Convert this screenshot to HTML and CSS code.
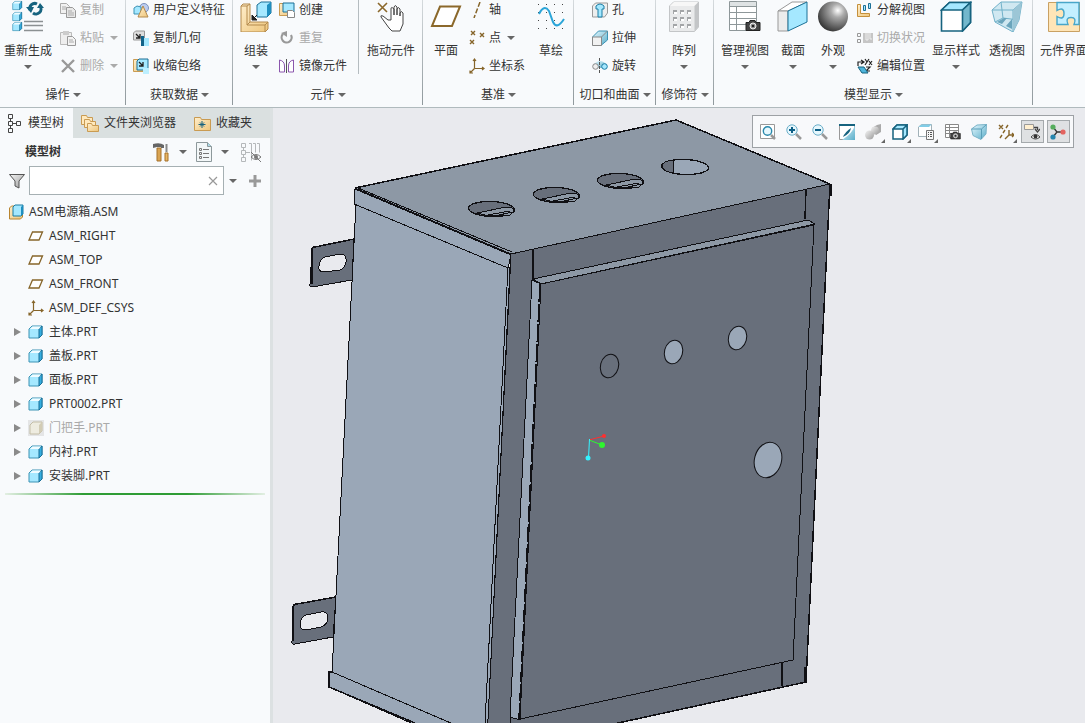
FILE: index.html
```html
<!DOCTYPE html>
<html lang="zh-CN">
<head>
  <meta charset="UTF-8" />
  <title>ASM电源箱.ASM</title>
  <meta name="viewport" content="width=device-width, initial-scale=1.0" />
  <link rel="stylesheet" href="styles.css">
</head>
<body>

<!-- Shared icons -->
<svg class="defs" aria-hidden="true">
  <defs>
    <linearGradient id="wood" x1="0" y1="0" x2="1" y2="1"><stop offset="0" stop-color="#ffeecb"/><stop offset="1" stop-color="#eec67c"/></linearGradient>
    <linearGradient id="steel" x1="0" y1="0" x2="1" y2="1"><stop offset="0" stop-color="#f4f4f4"/><stop offset="1" stop-color="#9b9b9b"/></linearGradient>
    <linearGradient id="aqua" x1="0" y1="0" x2="1" y2="1"><stop offset="0" stop-color="#e6f8ff"/><stop offset="1" stop-color="#5aaec9"/></linearGradient>
    <radialGradient id="ball" cx="0.66" cy="0.3" r="0.75"><stop offset="0" stop-color="#fff"/><stop offset="0.3" stop-color="#aaa"/><stop offset="1" stop-color="#333"/></radialGradient>
  </defs>
  <symbol id="cube" viewBox="0 0 16 16">
    <path d="M1 5l3-3h10v9l-3 3H1z" fill="#a5e8ff" stroke="#3d93b4"/>
    <path d="M11 5l3-3v9l-3 3z" fill="#35aee0" stroke="#1b6f96"/>
    <path d="M2 5l2.500-2.500h8.500L11 5z" fill="#effbff"/>
  </symbol>
  <symbol id="cube-off" viewBox="0 0 16 16">
    <path d="M0 0h16v16H0z" fill="#e4e5e6"/>
    <path d="M2 5l3-3h9v9l-3 3H2z" fill="#eeece0" stroke="#c3bda6"/>
    <path d="M11 5l3-3v9l-3 3z" fill="#d2ccb5"/>
  </symbol>
  <symbol id="plane" viewBox="0 0 16 16">
    <path d="M4.500 4h10l-3.500 8H1z" fill="#fff" stroke="#86652a" stroke-width="1.300"/>
  </symbol>
  <symbol id="csys" viewBox="0 0 16 16">
    <path d="M5.500 10V1M5.500 10.500H15M5.500 10.500L1 15M4 3l1.500-2L7 3M13 9l2 1.500L13 12M1 12.500V15h3" fill="none" stroke="#86652a" stroke-width="1.200"/>
  </symbol>
  <symbol id="camera" viewBox="0 0 16 12">
    <path d="M1 3h3l1-2h5l1 2h4v8H1z" fill="#444" stroke="#222"/>
    <circle cx="8" cy="6.500" r="3" fill="#999" stroke="#eee"/><circle cx="8" cy="6.500" r="1.300" fill="#222"/>
  </symbol>
</svg>

<!-- Ribbon -->
<header class="ribbon">
  <section class="group">
    <div class="tools">
      <button class="big w56">
        <svg viewBox="0 0 32 32"><use href="#cube" x="0" y="0" width="11" height="11"/><use href="#cube" x="0" y="11" width="11" height="11"/><use href="#cube" x="0" y="21" width="11" height="11"/>
          <path d="M12 21.500h19M12 25.500h19M12 30.500h19" stroke="#8b9092" stroke-width="1.500"/>
          <path d="M18 10a5 5 0 0 1 7-6M28 6a5 5 0 0 1-7 7" fill="none" stroke="#16637f" stroke-width="3"/>
          <path d="M14 7h8l-3 6zM25 8h7l-4-5z" fill="#16637f"/></svg>
        <span>重新生成</span><i class="caret"></i>
      </button>
      <div class="stack ml4">
        <button class="small off"><svg viewBox="0 0 16 16"><path d="M.500 1.500h6l3 3v7h-9z" fill="#f1f1f1" stroke="#aaa"/><path d="M6.500 5.500h6l3 3v7h-9z" fill="#e8e8e8" stroke="#999"/><path d="M2 5h4M2 7h4M8 9h4M8 11h6M8 13h6" stroke="#aaa"/></svg><span>复制</span></button>
        <button class="small off"><svg viewBox="0 0 16 16"><path d="M.500 2.500h11v12H.500z" fill="#eee" stroke="#bbb"/><path d="M3 1h6v4H3z" fill="#ccc"/><path d="M7.500 6.500h5l3 3v6h-8z" fill="#f3f3f3" stroke="#999"/><path d="M9 10h4M9 12h5" stroke="#aaa"/></svg><span>粘贴</span><i class="caret"></i></button>
        <button class="small off"><svg viewBox="0 0 16 16"><path d="M2 2l12 12M14 2L2 14" stroke="#999" stroke-width="2.400"/></svg><span>删除</span><i class="caret"></i></button>
      </div>
    </div>
    <button class="caption">操作<i class="caret"></i></button>
  </section>

  <section class="group">
    <div class="tools">
      <div class="stack ml7">
        <button class="small"><svg viewBox="0 0 16 16"><circle cx="11" cy="6" r="4.500" fill="#bccdf0" stroke="#7c92bd"/><path d="M1 6l3-2 4 1v7H1z" fill="#a5e8ff" stroke="#3d93b4"/><path d="M10 4l5 11H5z" fill="url(#wood)" stroke="#b48a4c"/></svg><span>用户定义特征</span></button>
        <button class="small"><svg viewBox="0 0 16 16"><path d="M.500 3l2-2h9v9h-11z" fill="#ddd" stroke="#999"/><path d="M3 4l4 4M7 4v4H3" stroke="#222" stroke-width="1.300" fill="none"/><path d="M9 8h7v8H9z" fill="#a5e8ff"/><path d="M8 6h3v10H8z" fill="#12638a"/></svg><span>复制几何</span></button>
        <button class="small"><svg viewBox="0 0 16 16"><path d="M.500 1.500h5l2 2h5v10H.500z" fill="url(#wood)" stroke="#c99b52"/><path d="M4 3l2-2h9v11H4z" fill="#a5e8ff" stroke="#1b6f96"/><path d="M6 4l4 4M10 4v4H6" stroke="#222" stroke-width="1.300" fill="none"/><path d="M10 10h6v6h-6z" fill="#bdefff"/></svg><span>收缩包络</span></button>
      </div>
    </div>
    <button class="caption">获取数据<i class="caret"></i></button>
  </section>

  <section class="group">
    <div class="tools">
      <button class="big w46">
        <svg viewBox="0 0 32 32"><path d="M1 6l2-2h7v18h18v7l-3 3H1z" fill="url(#wood)" stroke="#b48a4c"/><path d="M1 6h6v19h18v7M7 25l3-3M25 25l3-3M7 6l3-2" fill="none" stroke="#b48a4c"/>
          <path d="M17 5l4-3h10v11l-4 4H17z" fill="#a5e8ff" stroke="#1b6f96"/><path d="M27 5l4-3v11l-4 4z" fill="#1f8fc0"/><path d="M17 15l-4 4M12 15v5h5z" stroke="#222" fill="#222"/></svg>
        <span>组装</span><i class="caret"></i>
      </button>
      <div class="stack">
        <button class="small"><svg viewBox="0 0 16 16"><path d="M.500 1.500h14v12H.500z" fill="url(#wood)" stroke="#c99b52"/><path d="M4 1h11v9H4z" fill="#a5e8ff" stroke="#1b6f96"/><path d="M8.500 8.500h5l2 2v5h-7z" fill="#fff" stroke="#888"/></svg><span>创建</span></button>
        <button class="small off"><svg viewBox="0 0 16 16"><path d="M4 4a5 5 0 1 0 8 1" fill="none" stroke="#999" stroke-width="2.200"/><path d="M2 3l6-2v6z" fill="#999"/></svg><span>重复</span></button>
        <button class="small"><svg viewBox="0 0 16 16"><path d="M7.500 1v14" stroke="#555"/><path d="M.500 2q5 1 5 6v6h-5z" fill="#fff" stroke="#8b56ad"/><path d="M14.500 2q-5 1-5 6v6h5z" fill="#fff" stroke="#8b56ad"/></svg><span>镜像元件</span></button>
      </div>
      <div class="rule"></div>
      <button class="big w64">
        <svg viewBox="0 0 32 32"><path d="M3 3l9 9M12 3l-9 9" stroke="#8b682b" stroke-width="1.600"/><path d="M13 20l-5-4q-3-1-2 1l8 11 3 3h8l3-7V13q-2-3-3 0v3-7q-2-3-3 0v6-8q-2-3-3 0v8-6q-3-3-3 0v11z" fill="#fff" stroke="#444"/></svg>
        <span>拖动元件</span>
      </button>
    </div>
    <button class="caption">元件<i class="caret"></i></button>
  </section>

  <section class="group">
    <div class="tools">
      <button class="big w46">
        <svg viewBox="0 0 32 32"><path d="M10 6.500h20L22 26H2z" fill="#fff" stroke="#8b682b" stroke-width="2"/></svg>
        <span>平面</span>
      </button>
      <div class="stack">
        <button class="small"><svg viewBox="0 0 16 16"><path d="M11 0L5 16" stroke="#86652a" stroke-width="1.500" stroke-dasharray="5 2"/></svg><span>轴</span></button>
        <button class="small"><svg viewBox="0 0 16 16"><path d="M2 1l4 4M6 1L2 5M11 3l4 4M15 3l-4 4M1 10l4 4M5 10l-4 4" stroke="#86652a" stroke-width="1.400"/></svg><span>点</span><i class="caret"></i></button>
        <button class="small"><svg><use href="#csys"/></svg><span>坐标系</span></button>
      </div>
      <button class="big w46">
        <svg viewBox="0 0 32 32"><path d="M3 4.500h26M3 12.500h26M3 20.500h26M3 28.500h26" stroke="#444" stroke-dasharray="1 7"/><path d="M4 14q5-10 10-3l4 11q4 8 11-3" fill="none" stroke="#2ba5d8" stroke-width="2"/></svg>
        <span>草绘</span>
      </button>
    </div>
    <button class="caption">基准<i class="caret"></i></button>
  </section>

  <section class="group">
    <div class="tools">
      <div class="stack ml18">
        <button class="small"><svg viewBox="0 0 16 16"><path d="M.500 4l3-3h12v10l-3 4H.500z" fill="#eee" stroke="#999"/><path d="M4 4q4-4 8 0v3h-2v8H6V7H4z" fill="#a5e8ff" stroke="#1b7ca4"/></svg><span>孔</span></button>
        <button class="small"><svg viewBox="0 0 16 16"><path d="M.500 7l6-6h9v9l-6 5h-9z" fill="url(#aqua)" stroke="#3d93b4"/><path d="M.500 7h9v8.500h-9zM9.500 7l6-6" fill="#f1f1f1" stroke="#888"/></svg><span>拉伸</span></button>
        <button class="small"><svg viewBox="0 0 16 16"><path d="M1 7q7-8 14 0l-3 3H4z" fill="url(#aqua)"/><path d="M7.500 0v16" stroke="#555" stroke-dasharray="3 1"/><circle cx="3.500" cy="8.500" r="2.800" fill="#eee" stroke="#888"/><circle cx="12.500" cy="8.500" r="2.800" fill="#a5e8ff" stroke="#1b7ca4"/></svg><span>旋转</span></button>
      </div>
    </div>
    <button class="caption">切口和曲面<i class="caret"></i></button>
  </section>

  <section class="group">
    <div class="tools">
      <button class="big w56">
        <svg viewBox="0 0 32 32"><path d="M1.500 6l4-4h25v25l-4 4.500h-25z" fill="#e9eaeb" stroke="#c3c5c7"/><path d="M26.500 6l4-4v25l-4 4z" fill="#c3c5c7"/><path d="M2 6l4-4h24l-4 4z" fill="#f7f7f7"/>
          <path d="M5 12h4M12 12h4M19 12h4M5 19h4M12 19h4M19 19h4M5 26h4M12 26h4M19 26h4" stroke="#a3a5a7" stroke-width="4"/><path d="M6 13h3M13 13h3M20 13h3M6 20h3M13 20h3M20 20h3M6 27h3M13 27h3M20 27h3" stroke="#fff" stroke-width="2"/></svg>
        <span>阵列</span><i class="caret"></i>
      </button>
    </div>
    <button class="caption">修饰符<i class="caret"></i></button>
  </section>

  <section class="group">
    <div class="tools views">
      <button class="big w56">
        <svg viewBox="0 0 32 32"><path d="M.500 1.500h27v29H.500z" fill="#fff" stroke="#8e9799"/><path d="M0 6.500h28M7.500 2v28M0 12.500h28M0 18.500h28M0 24.500h28" stroke="#8e9799"/><path d="M1 2h26v4H1z" fill="#dfe3e4"/><use href="#camera" x="16" y="19" width="16" height="13"/></svg>
        <span>管理视图</span><i class="caret"></i>
      </button>
      <button class="big w40">
        <svg viewBox="0 0 32 32"><path d="M1 11L15 2h15L11 11z" fill="#fff" stroke="#999"/><path d="M1 11h10v20H1z" fill="#ececec" stroke="#999"/><path d="M11 11l19-9v20l-19 9z" fill="#a5e8ff" stroke="#1b7196"/></svg>
        <span>截面</span><i class="caret"></i>
      </button>
      <button class="big w40">
        <svg viewBox="0 0 32 32"><circle cx="16" cy="16.500" r="15" fill="url(#ball)"/></svg>
        <span>外观</span><i class="caret"></i>
      </button>
      <div class="stack ml4">
        <button class="small"><svg viewBox="0 0 16 16"><path d="M.500 2.500h3v9h9v3h-12z" fill="url(#wood)" stroke="#c4903c"/><path d="M6.500 3.500h2v5h-2zM11.500 1.500h2v5h-2z" fill="#a5e8ff" stroke="#1b6f96"/></svg><span>分解视图</span></button>
        <button class="small off"><svg viewBox="0 0 16 16"><path d="M.500 3.500h3v3h-3zM.500 9.500h3v3h-3z" fill="none" stroke="#999"/><path d="M6 3h10v10H6z" fill="#c6c6c6"/><path d="M9 3v7h2V3M13 3v6h2" fill="none" stroke="#eee"/></svg><span>切换状况</span></button>
        <button class="small"><svg viewBox="0 0 16 16"><path d="M1 8V4h5M4 2l3 2-3 2M8 1l2 3 2-3M10 4L8 7M12 3l3 4M15 3l-3 4M9 9h4l-4 4h4" fill="none" stroke="#222" stroke-width="1.200"/><path d="M1 9h6l4 6H5z" fill="#4eb5dc" stroke="#16637f"/></svg><span>编辑位置</span></button>
      </div>
      <button class="big w56">
        <svg viewBox="0 0 32 32"><path d="M1.500 10l8-7.500h21v20l-8 8.500h-21z" fill="#fff" stroke="#16637f" stroke-width="1.600"/><path d="M1.500 10l8-7.500h21l-8 7.500z" fill="#a5e8ff" stroke="#16637f" stroke-width="1.600"/><path d="M22.500 10l8-7.500v20l-8 8.500z" fill="#73b7cc" stroke="#16637f" stroke-width="1.600"/></svg>
        <span>显示样式</span><i class="caret"></i>
      </button>
      <button class="big w46">
        <svg viewBox="0 0 32 32"><path d="M1 10L10 2h21l-3 18-6 12L4 22z" fill="#d0e8f1" stroke="#71b1c9"/><path d="M1 10h21L31 2M22 10v22M10 2l2 16 16 2M12 18l-8 4" fill="none" stroke="#71b1c9"/><path d="M22 10l9-8-3 18-6 12z" fill="#9cc6d6"/><path d="M6 22l7-4h3l-5 6zM15 26l6-7v10z" fill="#6ba5bc"/></svg>
        <span>透视图</span>
      </button>
    </div>
    <button class="caption">模型显示<i class="caret"></i></button>
  </section>

  <section class="group">
    <div class="tools views">
      <button class="big w56">
        <svg viewBox="0 0 32 32"><path d="M.500 2.500h31v29H.500z" fill="#ffe5b7" stroke="#c9a163"/><path d="M9 2.500h22v22h-5q3-7-3-7t-3 7H9v-8q7 4 7-3t-7-3z" fill="#c3efff" stroke="#48a6c9" stroke-width="1.400"/></svg>
        <span>元件界面</span>
      </button>
    </div>
  </section>
</header>

<div class="work">
  <!-- Model tree -->
  <aside class="panel">
    <nav class="tabs">
      <button class="tab active"><svg viewBox="0 0 20 20"><path d="M4.500 1.500h4v4h-4zM4.500 8.500h4v4h-4zM4.500 15.500h4v4h-4zM12.500 8.500h4v4h-4zM6.500 6v2M6.500 13v2M9 10.500h3" fill="none" stroke="#444"/></svg>模型树</button>
      <button class="tab"><svg viewBox="0 0 20 20"><path d="M1.500 2.500h5l1 2h5v7h-11z" fill="#ffe9bd" stroke="#c99b52"/><path d="M4.500 6.500h5l1 2h5v6h-11z" fill="#ffe9bd" stroke="#c99b52"/><path d="M7.500 10.500h4l1 2h6v6h-11z" fill="url(#wood)" stroke="#c99b52"/></svg>文件夹浏览器</button>
      <button class="tab"><svg viewBox="0 0 20 20"><path d="M2.500 4.500h6l1 2h9v11h-16z" fill="url(#wood)" stroke="#c99b52"/><path d="M10 8v7M6.500 11.500h7M8 9.500l4 4M12 9.500l-4 4" stroke="#16637f"/></svg>收藏夹</button>
    </nav>

    <div class="panel-head">
      <h2>模型树</h2>
      <button aria-label="设置"><svg viewBox="0 0 20 20"><path d="M1 2q7-2 11 1v3H9V5H5L1 6z" fill="#666"/><path d="M5 6h4v13H5z" fill="#d9a452" stroke="#a5712a"/><path d="M13.500 2h2v8h-2z" fill="#888"/><path d="M13 11h3v8h-3z" fill="#e8b665" stroke="#a5712a"/></svg></button>
      <i class="caret"></i>
      <button aria-label="显示"><svg viewBox="0 0 20 20"><path d="M2.500.500h11l4 4v15h-15z" fill="#f3f7f8" stroke="#8d989b"/><path d="M13.500.500v4h4" fill="#aedbe8" stroke="#8d989b"/><path d="M5.500 6.500h2v2h-2zM5.500 10.500h2v2h-2zM5.500 14.500h2v2h-2zM9 7.500h6M9 11.500h6M9 15.500h6" fill="none" stroke="#777"/></svg></button>
      <i class="caret"></i>
      <button class="hide-btn" aria-label="隐藏"><svg viewBox="0 0 20 20"><path d="M.500 1.500h4v4h-4zM.500 8.500h4v4h-4zM.500 15.500h4v4h-4zM2.500 5v3M2.500 13v2M5 10.500h4M8 1.500h2.500v17M12 1.500h2.500v9M16 1.500h2.500v9" fill="none" stroke="#b5b8ba"/><path d="M10 15q5-5 10 0-5 5-10 0zM10 10l10 10" fill="none" stroke="#777"/><circle cx="15" cy="15" r="2" fill="#777"/></svg></button>
    </div>

    <div class="search">
      <svg viewBox="0 0 16 16"><path d="M.500 1.500h15L10 8v7l-4-2V8z" fill="url(#steel)" stroke="#555"/></svg>
      <label class="field"><input type="text" aria-label="搜索"><button aria-label="清除"><svg viewBox="0 0 10 10"><path d="M1 1l8 8M9 1L1 9" stroke="#999" stroke-width="1.200"/></svg></button></label>
      <i class="caret"></i>
      <button aria-label="添加"><svg viewBox="0 0 12 12"><path d="M6 0v12M0 6h12" stroke="#999" stroke-width="3"/></svg></button>
    </div>

    <ul class="tree">
      <li class="root"><svg viewBox="0 0 16 16"><path d="M1.500 4l2-2h3v9h8v2l-2 2h-11z" fill="url(#wood)" stroke="#b8842f"/><path d="M5 3l2-2h8v9l-2 2H5z" fill="#a5e8ff" stroke="#1b7ca4"/><path d="M13 3l2-2v9l-2 2z" fill="#1f8fc0"/></svg>ASM电源箱.ASM</li>
      <li><svg><use href="#plane"/></svg>ASM_RIGHT</li>
      <li><svg><use href="#plane"/></svg>ASM_TOP</li>
      <li><svg><use href="#plane"/></svg>ASM_FRONT</li>
      <li><svg><use href="#csys"/></svg>ASM_DEF_CSYS</li>
      <li class="part"><svg><use href="#cube"/></svg>主体.PRT</li>
      <li class="part"><svg><use href="#cube"/></svg>盖板.PRT</li>
      <li class="part"><svg><use href="#cube"/></svg>面板.PRT</li>
      <li class="part"><svg><use href="#cube"/></svg>PRT0002.PRT</li>
      <li class="part off"><svg><use href="#cube-off"/></svg>门把手.PRT</li>
      <li class="part"><svg><use href="#cube"/></svg>内衬.PRT</li>
      <li class="part"><svg><use href="#cube"/></svg>安装脚.PRT</li>
    </ul>
    <div class="insert-line"></div>
  </aside>

  <!-- Graphics area -->
  <main class="view">
    <svg class="model" viewBox="273 108 812 615" preserveAspectRatio="xMinYMin slice" shape-rendering="crispEdges">
      <g stroke="#101014" stroke-width="1" stroke-linejoin="round">
        <!-- mounting feet -->
        <path d="M315 247L354 239L352 280L312 287Q309 287 310 284L312 250Q312 247 315 247Z" fill="#686f7b"/>
        <path d="M312 284V250Q312 247 315 247L354 239" fill="none" stroke-width="1.500"/>
        <path d="M325 257L340 254Q347 254 346 262Q345 268 340 270L324 272Q318 272 319 266Q320 259 325 257Z" fill="#e9eaee"/>
        <path d="M297 604L336 597L333 637L295 644Q291 645 292 641L293 608Q293 604 297 604Z" fill="#686f7b"/>
        <path d="M293 641V608Q293 604 297 604L336 597" fill="none" stroke-width="1.500"/>
        <path d="M306 615L321 612Q329 611 328 619Q327 625 321 627L306 630Q300 630 300 624Q301 617 306 615Z" fill="#e9eaee"/>

        <!-- body side -->
        <path d="M356 204L510 268L487 740L332 673Z" fill="#9aa7b7"/>
        <path d="M332 672L495 742L450 740L329 687V672Z" fill="#9aa7b7"/>
        <path d="M332 672H329V687L415 723" fill="none" stroke-width="1.500"/>
        <path d="M508 267L485 723" fill="none"/>

        <!-- front frame -->
        <path d="M511 254L830 184L806 682L540 740H487Z" fill="#686f7b"/>
        <path d="M830 184L806 682L540 740" fill="none" stroke-width="1.500"/>
        <path d="M806 189L805 219" stroke-width="1.500"/>
        <path d="M533 249V280" stroke-width="1.500"/>
        <path d="M830 184V196M805 667V683" stroke-width="3"/>

        <!-- lid -->
        <path d="M355 188L676 120L830 184L511 254Z" fill="#8d98a5"/>
        <path d="M355 188L676 120L830 184" fill="none" stroke-width="1.500"/>
        <path d="M355 189L511 255L508 268L354 204Z" fill="#9aa7b7"/>
        <path d="M358 188L512 252" fill="none"/>

        <!-- door -->
        <path d="M533 279L808 220L815 224L541 284Z" fill="#8d98a5"/>
        <path d="M532 280L541 284L520 720L510 717Z" fill="#9aa7b7"/>
        <path d="M541 284L814 225L793 660L520 719Z" fill="#686f7b"/>
        <path d="M540 284L519 719" fill="none" stroke-width="1.500" stroke-dasharray="18 2"/>
        <path d="M510 700V723"/>
        <path d="M782 663V686" stroke-width="2"/>
        <ellipse cx="609.500" cy="366" rx="9" ry="12" fill="#686f7b" transform="rotate(15 609.500 366)"/>
        <ellipse cx="673.500" cy="352" rx="9" ry="12" fill="#9aa7b7" transform="rotate(15 673.500 352)"/>
        <ellipse cx="737.500" cy="338" rx="9" ry="12" fill="#9aa7b7" transform="rotate(15 737.500 338)"/>
        <ellipse cx="768" cy="460" rx="13.500" ry="18" fill="#9aa7b7" transform="rotate(15 768 460)"/>

        <!-- cable holes in the lid -->
        <g id="hole">
          <ellipse cx="491.500" cy="209" rx="23" ry="7.500" fill="#686f7b" stroke-width="1.300" transform="rotate(2 491.500 209)"/>
          <path d="M477 213L506 207Q514 207 514 211L510 215Q492 218 477 213Z" fill="#8d98a5"/>
          <path d="M488 215L510 211M494 216L513 212" fill="none"/>
        </g>
        <use href="#hole" x="65" y="-14"/>
        <use href="#hole" x="129" y="-28"/>
        <ellipse cx="685" cy="167" rx="23.500" ry="7.500" fill="#9aa7b7" stroke-width="1.300" transform="rotate(2 685 167)"/>
        <path d="M673 160V173Q662 171 662 166Q663 161 673 160Z" fill="#686f7b"/>
      </g>

      <!-- spin centre -->
      <g shape-rendering="auto">
        <path d="M589 440L604 436" stroke="#ff2f2f"/><circle cx="604" cy="436" r="2" fill="#ff2f2f"/>
        <path d="M589 440L602 445" stroke="#2ff52f"/><circle cx="602" cy="445" r="3" fill="#2ff52f"/>
        <path d="M589.500 439L588.500 458" stroke="#35f2ff"/><circle cx="588" cy="458" r="2.500" fill="#35f2ff"/>
      </g>
    </svg>

    <div class="view-tools">
      <button aria-label="重新调整"><svg viewBox="0 0 16 16"><path d="M.500.500h14v14H.500z" fill="#fff" stroke="#999"/><circle cx="7.500" cy="7" r="4.200" fill="#e6f7fd" stroke="#2b89ac" stroke-width="1.400"/><path d="M11 11l4 4" stroke="#999" stroke-width="2.500"/></svg></button>
      <button aria-label="放大"><svg viewBox="0 0 16 16"><circle cx="6" cy="6" r="5.200" fill="#e6f7fd" stroke="#6aaec9"/><path d="M6 3v6M3 6h6" stroke="#0d5f86" stroke-width="2"/><path d="M10 10l5 5" stroke="#999" stroke-width="2.500"/></svg></button>
      <button aria-label="缩小"><svg viewBox="0 0 16 16"><circle cx="6" cy="6" r="5.200" fill="#e6f7fd" stroke="#6aaec9"/><path d="M3 6h6" stroke="#0d5f86" stroke-width="2"/><path d="M10 10l5 5" stroke="#999" stroke-width="2.500"/></svg></button>
      <button aria-label="重画"><svg viewBox="0 0 16 16"><path d="M.500.500h15v15H.500z" fill="#fff" stroke="#999"/><path d="M16 1v15H3Q14 9 16 1z" fill="url(#aqua)"/><path d="M0 1h16" stroke="#16637f" stroke-width="2"/><path d="M4 13q2-5 8-9-1 6-8 9z" fill="#16637f"/></svg></button>
      <button class="more" aria-label="渲染"><svg viewBox="0 0 16 16"><path d="M7 4l5-3 4-1v8l-5 3z" fill="#aaa"/><circle cx="10" cy="6.500" r="4" fill="url(#steel)"/><circle cx="4.500" cy="11" r="4.500" fill="url(#steel)"/></svg></button>
      <button class="more" aria-label="显示样式"><svg viewBox="0 0 16 16"><path d="M1 5l4-4h10v10l-4 4H1z" fill="#fff" stroke="#16637f" stroke-width="1.500"/><path d="M1 5l4-4h10l-4 4zM11 5l4-4v10l-4 4z" fill="#a5e8ff" stroke="#16637f" stroke-width="1.500"/></svg></button>
      <button class="more" aria-label="已保存方向"><svg viewBox="0 0 16 16"><path d="M.500 3l3-2.500h10v9l-3 3H.500z" fill="#fff" stroke="#a1b1b8"/><path d="M.500 3l3-2.500h10L11 3z" fill="#81cde7"/><path d="M8.500 6.500h7v9h-7z" fill="#f7f7f7" stroke="#777"/><path d="M10 8.500h4M10 10.500h4M10 12.500h4" stroke="#555" stroke-dasharray="1 1 3"/></svg></button>
      <button aria-label="视图管理器"><svg viewBox="0 0 16 16"><path d="M.500.500h13v13H.500zM0 3.500h14M0 6.500h14M0 9.500h14M4.500 0v14" fill="#fff" stroke="#888"/><use href="#camera" x="5" y="7" width="11" height="9"/></svg></button>
      <button aria-label="透视图"><svg viewBox="0 0 16 16"><path d="M.500 5L6 1l9.500-.500L15 10l-5 5.500-8-4z" fill="url(#aqua)" stroke="#7ab3c8"/><path d="M.500 5h10l5-4.500M10.500 5v10" fill="none" stroke="#5a9fb8"/></svg></button>
      <button class="more" aria-label="基准显示"><svg viewBox="0 0 16 16"><path d="M1 1l4 4M5 1L1 5M10 1L8 4M7 6l-2 3M4 11l-2 3M11 6v5h5M11 11l-4 4M14 9l2 2-2 2" fill="none" stroke="#86652a" stroke-width="1.400"/></svg></button>
      <button class="on" aria-label="注释显示"><svg viewBox="0 0 16 16"><path d="M.500.500h9v5h-9z" fill="#ffefcf" stroke="#999"/><path d="M10 3.500h3.500V6M11 5l2.500 3L16 5" fill="none" stroke="#444" stroke-width="1.300"/><path d="M7 13q4.500-5 9 0-4.500 4-9 0z" fill="#fff" stroke="#444"/><circle cx="11.500" cy="12.500" r="2" fill="#333"/></svg></button>
      <button class="on" aria-label="旋转中心"><svg viewBox="0 0 16 16"><path d="M3 3l4 5-4 5M7 8h6" fill="none" stroke="#333" stroke-width="1.300"/><circle cx="3" cy="3" r="2.600" fill="#55ad5d"/><circle cx="13" cy="8" r="2.600" fill="#e3635f"/><circle cx="3" cy="13" r="2.600" fill="#2686ae"/></svg></button>
    </div>
  </main>
</div>

</body>
</html>
```

FILE: styles.css
```css
html, body {
  margin: 0;
  padding: 0;
  height: 100%;
  overflow: hidden;
}

body {
  display: flex;
  flex-direction: column;
  font-family: "Noto Sans", "Noto Sans CJK SC", sans-serif;
  font-size: 12px;
  line-height: 16px;
  color: #333;
  background: #f8fafc;
}

button {
  padding: 0;
  border: none;
  background: none;
  font: inherit;
  color: inherit;
  white-space: nowrap;
}

svg {
  display: block;
  flex: none;
}

.defs {
  position: absolute;
  width: 0;
  height: 0;
}

.caret {
  flex: none;
  border: 4px solid transparent;
  border-top-color: #666;
  border-bottom: none;
}

.off {
  color: #aaa;
}

.off .caret {
  border-top-color: #aaa;
}

/* Ribbon */
.ribbon {
  flex: none;
  display: grid;
  grid-template-columns: 126px 107px 190px 151px 82px 58px 319px 1fr;
  border-bottom: 1px solid #b0babd;
  overflow: hidden;
}

.group {
  display: flex;
  flex-direction: column;
  min-width: 0;
  background: linear-gradient(#d5dadd, #8f989c) right top / 1px 105px no-repeat;
}

.group:last-child {
  background: none;
}

.tools {
  display: flex;
  height: 83px;
}

.views {
  padding: 0 3px;
}

.caption {
  display: flex;
  justify-content: center;
  align-items: center;
  gap: 3px;
  height: 24px;
}

.big {
  flex: none;
  display: flex;
  flex-direction: column;
  align-items: center;
  justify-content: flex-start;
}

.big svg {
  width: 32px;
  height: 32px;
}

.big span {
  margin: 11px 0 6px;
}

.w40 { width: 40px; }
.w46 { width: 46px; }
.w56 { width: 56px; }
.w64 { width: 64px; }
.ml4 { margin-left: 4px; }
.ml7 { margin-left: 7px; }
.ml18 { margin-left: 18px; }

/* first row runs under the top edge */
.stack {
  display: flex;
  flex-direction: column;
  margin-top: -4px;
  flex: 1;
}

.small {
  display: flex;
  align-items: center;
  gap: 4px;
  height: 28px;
}

.small svg {
  width: 16px;
  height: 16px;
}

.small .caret {
  margin-left: 2px;
}

.rule {
  width: 1px;
  height: 74px;
  background: #b5bcc0;
}

/* Work area */
.work {
  flex: 1;
  display: flex;
  min-height: 0;
}

.panel {
  flex: none;
  width: 270px;
  border-right: 3px solid #dce1e2;
}

.tabs {
  display: flex;
  height: 30px;
  background: #dae0e0;
}

.tab {
  display: flex;
  align-items: center;
  gap: 4px;
  padding: 0 9px 0 7px;
}

.tab svg {
  width: 20px;
  height: 20px;
}

.tab.active {
  padding-left: 4px;
  background: #f8fafc;
}

.panel-head {
  display: flex;
  align-items: center;
  gap: 7px;
  height: 28px;
  padding: 0 9px 0 25px;
}

.panel-head h2 {
  flex: 1;
  margin: 0;
  font-size: 12px;
}

.panel-head svg {
  width: 20px;
  height: 20px;
}

.hide-btn {
  margin-left: 5px;
}

.search {
  display: flex;
  align-items: center;
  height: 29px;
  padding: 0 12px 0 9px;
  gap: 4px;
}

.search > svg {
  width: 16px;
  height: 16px;
}

.search > button svg {
  width: 12px;
  height: 12px;
}

.search > button {
  margin-left: 8px;
}

.field {
  flex: 1;
  display: flex;
  align-items: center;
  box-sizing: border-box;
  height: 29px;
  margin-right: 1px;
  padding-right: 5px;
  border: 1px solid #a6b0b3;
  background: #fff;
}

.field input {
  flex: 1;
  min-width: 0;
  border: none;
  outline: none;
  background: none;
  font: inherit;
}

.field svg {
  width: 10px;
  height: 10px;
}

.tree {
  list-style: none;
  margin: 5px 0;
  padding: 0;
}

.tree li {
  display: flex;
  align-items: center;
  gap: 5px;
  height: 24px;
  padding-left: 28px;
}

.tree svg {
  width: 16px;
  height: 16px;
}

.tree .root {
  padding-left: 8px;
}

.tree .part {
  padding-left: 14px;
}

.part::before {
  content: "";
  margin-right: 2px;
  border: 4px solid transparent;
  border-left: 7px solid #8a8a8a;
  border-right: none;
}

.insert-line {
  height: 2px;
  margin: 0 5px;
  background: linear-gradient(90deg, #e3efe3, #2f9c35 30%, #2f9c35 70%, #e3efe3);
}

.view {
  flex: 1;
  position: relative;
  min-width: 0;
  overflow: hidden;
  background: #e9eaee;
}

.model {
  width: 100%;
  height: 100%;
}

/* floats over the model */
.view-tools {
  position: absolute;
  top: 7px;
  right: 11px;
  display: flex;
  justify-content: space-between;
  align-items: center;
  box-sizing: border-box;
  width: 322px;
  height: 33px;
  padding: 0 3px;
  border: 1px solid #9da1a5;
  background: #f8f9fb;
}

.view-tools button {
  position: relative;
  display: grid;
  place-items: center;
  box-sizing: border-box;
  width: 23px;
  height: 23px;
}

.view-tools svg {
  width: 16px;
  height: 16px;
}

.view-tools .on {
  border: 1px solid #a4a9ac;
  background: #dfe1e3;
}

.more::after {
  content: "";
  position: absolute;
  right: 0;
  bottom: 0;
  border: 2px solid #666;
  border-top-color: transparent;
  border-left-color: transparent;
}
```
